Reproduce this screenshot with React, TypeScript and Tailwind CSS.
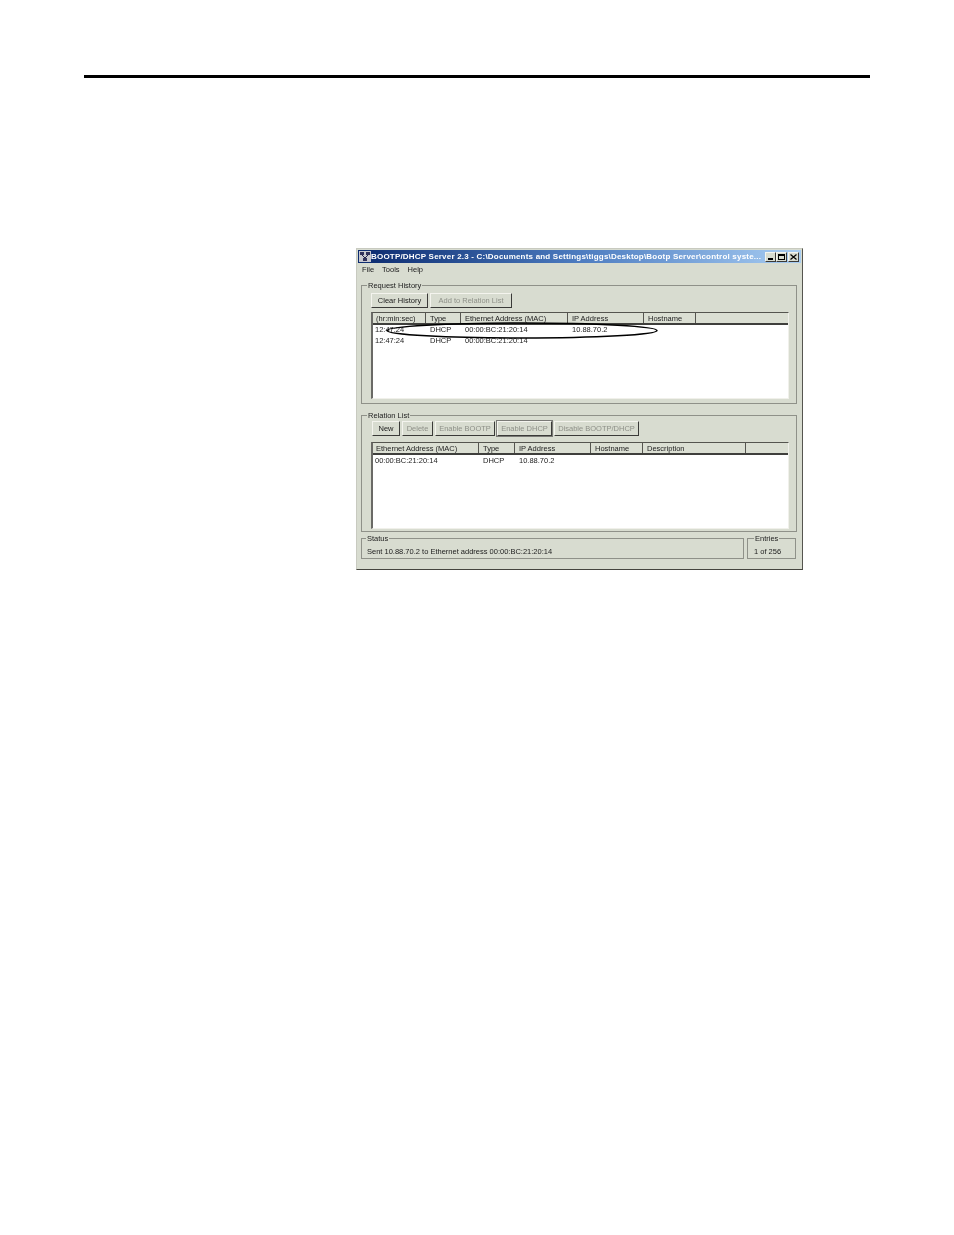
const raised = "border border-t-[#f4f4ee] border-l-[#f4f4ee] border-r-[#3a3a38] border-b-[#3a3a38]";

function Btn({ label, w, off, focus, ml }: { label: string; w: string; off?: boolean; focus?: boolean; ml?: string }) {
  return (
    <div className={`${w} ${ml ?? ""} h-[15px] flex items-center justify-center whitespace-nowrap ${raised} ${focus ? "outline outline-1 outline-[#7a7a76]" : ""} ${off ? "text-[#8e9088]" : "text-[#1a1a1a]"}`}>
      {label}
    </div>
  );
}

function Table({ cols, rows, overlay, rowPad }: { cols: [string, string][]; rows: string[][]; overlay?: React.ReactNode; rowPad?: string }) {
  return (
    <div className="relative h-[87px] flex flex-col border-t border-l-2 border-t-[#55554f] border-l-[#6a6a66] border-r border-r-[#f0f0ea] border-b border-b-[#f0f0ea] bg-white">
      <div className="h-[12px] flex shrink-0 bg-[#dbdfd3] border-b-2 border-b-[#3f3f3c]">
        {cols.map(([label, w], i) => (
          <div key={i} className={`${w} shrink-0 ${i === 0 ? "pl-[3px]" : "pl-[4px]"} pt-[1px] leading-[10px] whitespace-nowrap overflow-hidden border-r border-r-[#55554f] text-[#222]`}>{label}</div>
        ))}
      </div>
      <div className={rowPad ?? ""}>
        {rows.map((r, i) => (
          <div key={i} className="flex h-[10.5px] items-center">
            {r.map((c, j) => (
              <div key={j} className={`${cols[j][1]} shrink-0 ${j === 0 ? "pl-[2px]" : "pl-[4px]"} whitespace-nowrap leading-[10px] text-[#222]`}>{c}</div>
            ))}
          </div>
        ))}
      </div>
      {overlay}
    </div>
  );
}

const groupBox = "border border-[#8f9189] rounded-none m-0 min-w-0";
const legendBox = "px-[1px] text-[7.5px] leading-[8px] whitespace-nowrap";
const legendText = "relative top-[1px]";

export default function App() {
  return (
    <div className="w-[954px] h-[1235px] bg-white overflow-hidden pt-[75px] pl-[84px]" style={{ fontFamily: '"Liberation Sans", Arial, sans-serif' }}>
      <div className="w-[786px] h-[3px] bg-black" />
      <div className="ml-[272px] mt-[170px] w-[447px] h-[322px] bg-[#d8dcd0] border border-[#c8cac0] border-r-[#55554f] border-b-[#45453f] pt-[1px] text-[7.5px] text-[#222] blur-[0.35px]">
        <div className="h-[13px] mx-[1px] flex items-center bg-gradient-to-r from-[#0c2a6e] via-[#4d7cc0] to-[#a8cdf2] pl-[1px] pr-[2px]">
          <svg width="12" height="11" viewBox="0 0 12 11" className="shrink-0">
            <rect width="12" height="11" fill="#c8c8d0" />
            <path d="M1 1h4v3H1zM7 1h4v3H7zM4 7h4v3H4z" fill="#30305a" />
            <path d="M3 4l3 3M9 4L6 7" stroke="#20204a" strokeWidth="1" />
          </svg>
          <span className="flex-1 whitespace-nowrap overflow-hidden text-white font-bold text-[8px] tracking-[0.2px]">BOOTP/DHCP Server 2.3 - C:\Documents and Settings\tiggs\Desktop\Bootp Server\control syste...</span>
          <div className="flex items-center">
            {["min", "max"].map((k) => (
              <div key={k} className={`w-[11px] h-[10px] bg-[#d8dcd0] flex items-end justify-center ${raised}`}>
                {k === "min" ? <div className="w-[5px] h-[2px] bg-black mb-[1px]" /> : <div className="w-[7px] h-[6px] border border-black border-t-2 mb-[1px]" />}
              </div>
            ))}
            <div className={`ml-[1px] w-[11px] h-[10px] bg-[#d8dcd0] flex items-center justify-center text-black ${raised}`}>
              <svg width="7" height="6" viewBox="0 0 7 6"><path d="M0.5 0.5l6 5M6.5 0.5l-6 5" stroke="#000" strokeWidth="1.2" /></svg>
            </div>
          </div>
        </div>
        <div className="h-[13px] flex items-center gap-[8px] pl-[5px] text-[#222] leading-none">
          <span>File</span><span>Tools</span><span>Help</span>
        </div>

        <fieldset className={`${groupBox} ml-[4px] mt-[5px] w-[436px] h-[123px] pl-[9px] pr-[7px] pb-0`}>
          <legend className={`ml-[-4px] ${legendBox}`}><span className={legendText}>Request History</span></legend>
          <div className="flex gap-[2px] mt-[4px]">
            <Btn label="Clear History" w="w-[57px]" />
            <Btn label="Add to Relation List" w="w-[82px]" off />
          </div>
          <div className="mt-[4px]">
            <Table
              cols={[["(hr:min:sec)", "w-[53px]"], ["Type", "w-[35px]"], ["Ethernet Address (MAC)", "w-[107px]"], ["IP Address", "w-[76px]"], ["Hostname", "w-[52px]"]]}
              rows={[["12:47:24", "DHCP", "00:00:BC:21:20:14", "10.88.70.2", ""], ["12:47:24", "DHCP", "00:00:BC:21:20:14", "", ""]]}
              overlay={
                <svg className="absolute left-[8px] top-[6px]" width="290" height="22" viewBox="0 0 290 22">
                  <ellipse cx="141" cy="11.5" rx="135" ry="7.5" fill="none" stroke="#000" strokeWidth="1.6" />
                </svg>
              }
            />
          </div>
        </fieldset>

        <fieldset className={`${groupBox} ml-[4px] mt-[7px] w-[436px] h-[121px] pl-[9px] pr-[7px] pb-0`}>
          <legend className={`ml-[-4px] ${legendBox}`}><span className={legendText}>Relation List</span></legend>
          <div className="flex mt-[2px]">
            <Btn label="New" w="w-[28px]" ml="ml-[1px]" />
            <Btn label="Delete" w="w-[31px]" off ml="ml-[2px]" />
            <Btn label="Enable BOOTP" w="w-[60px]" off ml="ml-[2px]" />
            <Btn label="Enable DHCP" w="w-[55px]" off focus ml="ml-[2px]" />
            <Btn label="Disable BOOTP/DHCP" w="w-[85px]" off ml="ml-[2px]" />
          </div>
          <div className="mt-[6px]">
            <Table
              cols={[["Ethernet Address (MAC)", "w-[106px]"], ["Type", "w-[36px]"], ["IP Address", "w-[76px]"], ["Hostname", "w-[52px]"], ["Description", "w-[103px]"]]}
              rows={[["00:00:BC:21:20:14", "DHCP", "10.88.70.2", "", ""]]}
              rowPad="pt-[1px]"
            />
          </div>
        </fieldset>

        <div className="flex ml-[4px] mt-[2px] gap-[3px]">
          <fieldset className={`${groupBox} w-[383px] h-[25px] px-[5px]`}>
            <legend className={`ml-[-1px] ${legendBox}`}><span className={legendText}>Status</span></legend>
            <div className="leading-[12px] mt-[4px] whitespace-nowrap">Sent 10.88.70.2 to Ethernet address 00:00:BC:21:20:14</div>
          </fieldset>
          <fieldset className={`${groupBox} w-[49px] h-[25px] pl-[6px] pr-[5px]`}>
            <legend className={`ml-[0px] ${legendBox}`}><span className={legendText}>Entries</span></legend>
            <div className="leading-[12px] mt-[4px] whitespace-nowrap">1 of 256</div>
          </fieldset>
        </div>
      </div>
    </div>
  );
}
